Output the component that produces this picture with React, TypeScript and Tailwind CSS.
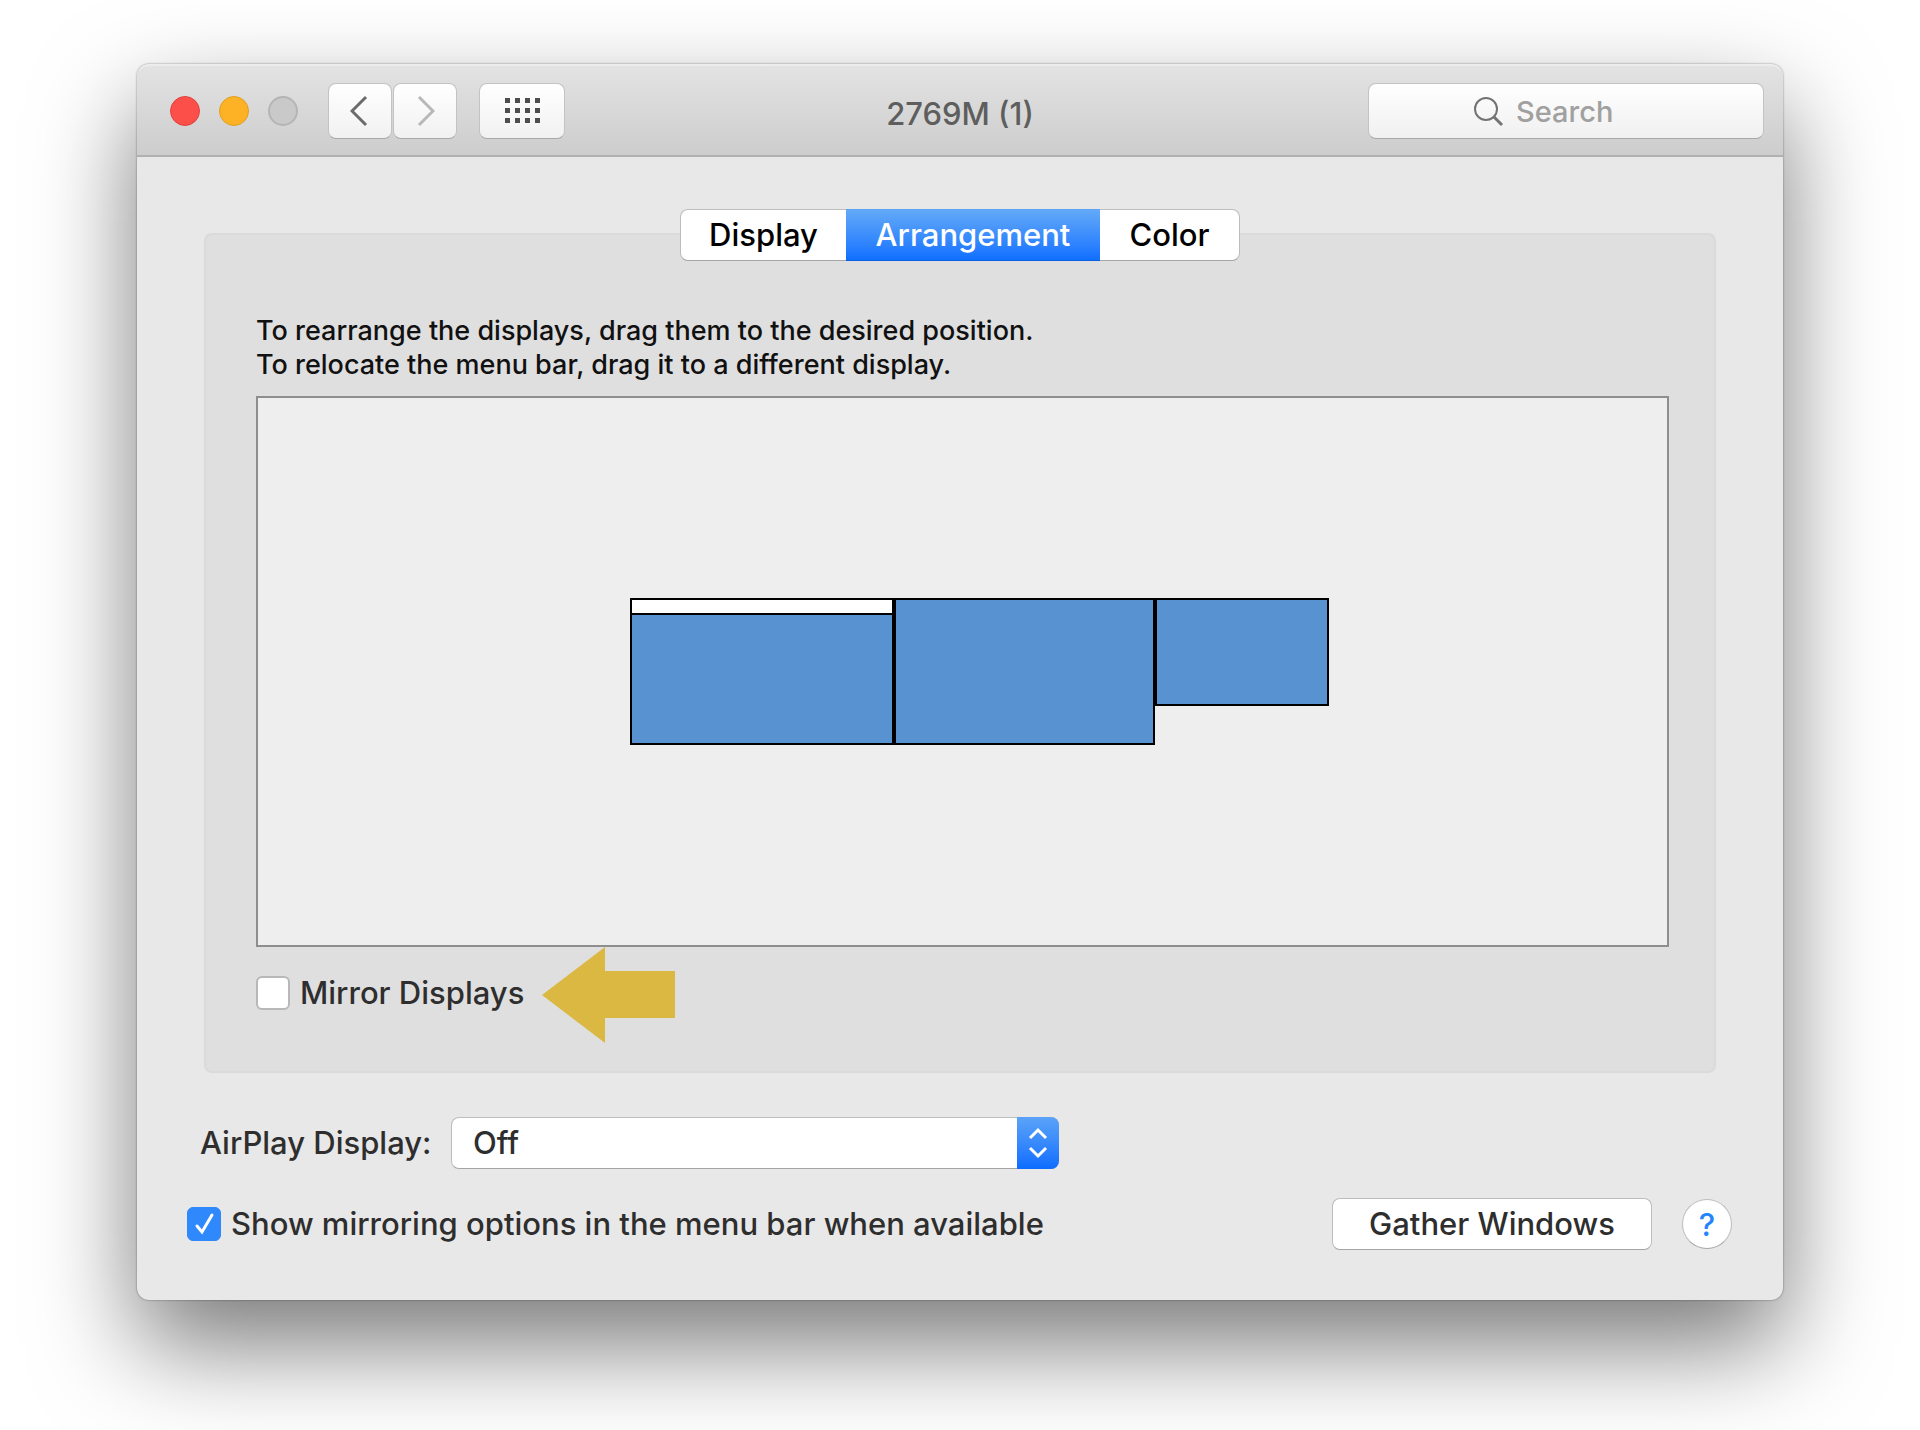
import { useState } from 'react';

type Screen = {
  id: string;
  x: number;
  y: number;
  width: number;
  height: number;
  hasMenuBar?: boolean;
};

const screens: Screen[] = [
  { id: 'main', x: 372, y: 200, width: 264, height: 147, hasMenuBar: true },
  { id: 'second', x: 636, y: 200, width: 261, height: 147 },
  { id: 'third', x: 897, y: 200, width: 174, height: 108 },
];

const tabs = [
  { name: 'Display', width: 'w-[166px]' },
  { name: 'Arrangement', width: 'w-[254px]' },
  { name: 'Color', width: 'w-[140px]' },
];

const toolbarButton =
  'flex h-14 items-center justify-center rounded-lg border border-[#c3c3c3] border-b-[#a9a9a9] bg-linear-to-b from-white to-[#f1f1f1]';

function TitleBar() {
  return (
    <header className="grid h-[93px] grid-cols-[1fr_auto_1fr] items-center rounded-t-xl border-b-2 border-[#b1b1b1] border-t-2 border-t-[#ededed] bg-linear-to-b from-[#e3e3e3] to-[#cdcdcd] px-[19px]">
      <div className="flex items-center pl-[14px]">
        <div className="flex gap-[19px]">
          <button aria-label="Close" className="size-[30px] rounded-full border border-[#e0443e] bg-[#fc4f4a]" />
          <button aria-label="Minimize" className="size-[30px] rounded-full border border-[#dea023] bg-[#fdb124]" />
          <button aria-label="Zoom" disabled className="size-[30px] rounded-full border-2 border-[#b5b5b5] bg-[#c9c9c9]" />
        </div>
        <div className="ml-[30px] flex gap-px">
          <button aria-label="Back" className={`w-16 ${toolbarButton}`}>
            <svg className="h-8 w-5" viewBox="0 0 20 32" fill="none" stroke="#6b6b6b" strokeWidth="3">
              <path d="M16 2 2 16l14 14" />
            </svg>
          </button>
          <button aria-label="Forward" disabled className={`w-16 ${toolbarButton}`}>
            <svg className="h-8 w-5" viewBox="0 0 20 32" fill="none" stroke="#b8b8b8" strokeWidth="3">
              <path d="m4 2 14 14L4 30" />
            </svg>
          </button>
        </div>
        <button aria-label="Show All" className={`ml-[22px] w-[86px] ${toolbarButton}`}>
          <svg className="h-[25px] w-[35px]" viewBox="0 0 35 25" fill="#4d4d4d">
            {[0, 10, 20].map((y) =>
              [0, 10, 20, 30].map((x) => <rect key={`${x}-${y}`} x={x} y={y} width="5" height="5" />),
            )}
          </svg>
        </button>
      </div>

      <h1 className="pt-2 text-[31px] text-[#5e5e5e]">2769M (1)</h1>

      <label className="flex h-14 w-[396px] items-center justify-center gap-3 justify-self-end rounded-lg border border-[#c3c3c3] border-b-[#a9a9a9] bg-linear-to-b from-white to-[#f0f0f0]">
        <svg className="size-8" viewBox="0 0 32 32" fill="none" stroke="#737373" strokeWidth="2">
          <circle cx="14" cy="14" r="11" />
          <path d="m22 22 8 8" strokeWidth="3" />
        </svg>
        <input
          type="search"
          aria-label="Search"
          placeholder="Search"
          className="w-36 bg-transparent pt-0.5 text-[29px] outline-none placeholder:text-[#a0a0a0]"
        />
      </label>
    </header>
  );
}

function Canvas() {
  return (
    <div className="relative h-[551px] border-2 border-[#8e8e8e] bg-[#eeeeee]">
      {screens.map((screen) => (
        <div
          key={screen.id}
          className="absolute border-2 border-black bg-[#5892d0]"
          style={{ left: screen.x, top: screen.y, width: screen.width, height: screen.height }}
        >
          {screen.hasMenuBar && <div className="h-[15px] border-b-2 border-black bg-white" />}
        </div>
      ))}
    </div>
  );
}

export default function App() {
  const [activeTab, setActiveTab] = useState('Arrangement');
  const [mirror, setMirror] = useState(false);
  const [showInMenuBar, setShowInMenuBar] = useState(true);

  return (
    <div className="min-h-screen overflow-hidden bg-white px-[137px] pt-16 pb-[130px] font-[Inter,sans-serif] text-[#2e2e2e]">
      <div className="rounded-xl bg-[#e8e8e8] font-medium shadow-[0_0_2px_rgba(0,0,0,0.5),0_45px_100px_rgba(0,0,0,0.53)]">
        <TitleBar />

        <main className="px-[67px] pt-[52px] pb-[50px]">
          {/* Tabs */}
          <div role="tablist" className="relative z-10 mx-auto flex w-fit">
            {tabs.map((tab) => (
              <button
                key={tab.name}
                role="tab"
                aria-selected={activeTab === tab.name}
                onClick={() => setActiveTab(tab.name)}
                className={`h-[52px] border-y text-[31px] first:rounded-l-lg first:border-l last:rounded-r-lg last:border-r ${tab.width} ${
                  activeTab === tab.name
                    ? 'border-t-[#5ba3f5] border-b-[#0a5fe0] bg-linear-to-b from-[#62a9f8] to-[#0f6fff] text-white'
                    : 'border-[#bdbdbd] border-b-[#a5a5a5] bg-white text-black'
                }`}
              >
                {tab.name}
              </button>
            ))}
          </div>

          {/* Arrangement panel */}
          <section className="-mt-7 rounded-lg border-2 border-[#dadada] bg-[#dfdfdf] pt-[79px] pr-[45px] pb-7 pl-[50px]">
            <p className="pb-[14px] text-[27px] leading-[34px] text-[#111111]">
              To rearrange the displays, drag them to the desired position.
              <br />
              To relocate the menu bar, drag it to a different display.
            </p>
            <Canvas />
            <div className="flex h-24 items-center gap-[18px]">
              <label className="flex items-center gap-[10px] pb-1 text-[31px] leading-9">
                <input
                  type="checkbox"
                  checked={mirror}
                  onChange={(e) => setMirror(e.target.checked)}
                  className="size-[34px] appearance-none rounded-md border-2 border-[#b8b8b8] bg-white checked:bg-[#2f89fc]"
                />
                Mirror Displays
              </label>
              <svg className="h-24 w-[133px]" viewBox="0 0 133 96" fill="#dbb842" aria-hidden="true">
                <path d="M0 48 63 0v24h70v47H63v25z" />
              </svg>
            </div>
          </section>

          {/* AirPlay */}
          <div className="-ml-1 mt-11 flex items-center text-[31px]">
            <label htmlFor="airplay" className="w-[251px] whitespace-nowrap">
              AirPlay Display:
            </label>
            <div className="relative w-[608px]">
              <select
                id="airplay"
                className="h-[52px] w-full appearance-none rounded-lg border border-[#bdbdbd] border-b-[#a5a5a5] bg-white pl-[21px]"
              >
                <option>Off</option>
                <option>On</option>
              </select>
              <span className="pointer-events-none absolute inset-y-0 right-0 flex w-[42px] items-center justify-center rounded-r-lg bg-linear-to-b from-[#5ba3f8] to-[#0a6cff]">
                <svg className="h-8 w-5" viewBox="0 0 20 32" fill="none" stroke="white" strokeWidth="3">
                  <path d="m2 11 8-8 8 8M2 21l8 8 8-8" />
                </svg>
              </span>
            </div>
          </div>

          {/* Bottom row */}
          <div className="-ml-[17px] mt-[29px] -mr-4 flex items-center justify-between">
            <label className="flex items-center gap-[10px] text-[31px]">
              <span className="relative size-[34px]">
                <input
                  type="checkbox"
                  checked={showInMenuBar}
                  onChange={(e) => setShowInMenuBar(e.target.checked)}
                  className="block size-[34px] appearance-none rounded-md border border-[#b8b8b8] bg-white checked:border-[#2f89fc] checked:bg-[#2f89fc]"
                />
                {showInMenuBar && (
                  <svg
                    className="pointer-events-none absolute inset-0 size-[34px]"
                    viewBox="0 0 34 34"
                    fill="none"
                    stroke="white"
                    strokeWidth="3"
                    strokeLinecap="round"
                  >
                    <path d="m10 19 5 6L25 8" />
                  </svg>
                )}
              </span>
              Show mirroring options in the menu bar when available
            </label>
            <div className="flex items-center gap-[30px]">
              <button className="h-[52px] w-80 rounded-lg border border-[#bdbdbd] border-b-[#a5a5a5] bg-white text-[31px]">
                Gather Windows
              </button>
              <button
                aria-label="Help"
                className="size-[50px] rounded-full border border-[#bdbdbd] border-b-[#a5a5a5] bg-white text-[31px] leading-none text-[#2384fc]"
              >
                ?
              </button>
            </div>
          </div>
        </main>
      </div>
    </div>
  );
}
